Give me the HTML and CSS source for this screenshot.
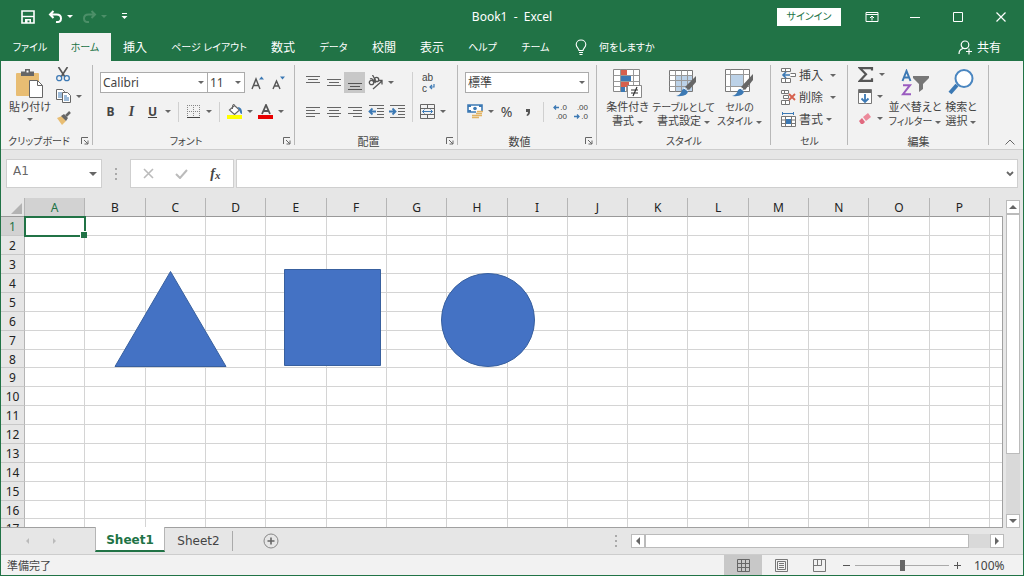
FILE: index.html
```html
<!DOCTYPE html>
<html lang="ja">
<head>
<meta charset="utf-8">
<title>Book1 - Excel</title>
<link rel="stylesheet" href="styles.css">
</head>
<body>
<div class="app">
  <header class="titlebar">
    <div class="quick">
      <button class="q-save" aria-label="上書き保存"><svg width="14" height="14" viewBox="0 0 14 14"><path d="M1 1h12v12H1z" fill="none" stroke="#fff" stroke-width="1.6"/><path d="M1 6.5h12" stroke="#fff" stroke-width="1.4"/><path d="M4 9h6v4H8.500v-2.500H6.500V13H4z" fill="#fff"/></svg></button>
      <button class="q-undo" aria-label="元に戻す"><svg width="15" height="13" viewBox="0 0 15 13"><path d="M5.500 1L2 4.500l3.500 3.500M2 4.500h6.500q4.500 0 4.500 4t-5 3.500" fill="none" stroke="#fff" stroke-width="2"/></svg></button>
      <i class="caret light"></i>
      <button class="q-redo" aria-label="やり直し"><svg width="15" height="13" viewBox="0 0 15 13"><path d="M9.500 1L13 4.500 9.500 8M13 4.500H6.500Q2 4.500 2 8.500T7 12" fill="none" stroke="#4c8f68" stroke-width="2"/></svg></button>
      <i class="caret dim"></i>
      <button class="q-more" aria-label="カスタマイズ"><svg width="7" height="7" viewBox="0 0 7 7"><path d="M1 .5h5" stroke="#fff"/><path d="M.5 3h6l-3 3z" fill="#fff"/></svg></button>
    </div>
    <h1>Book1&nbsp; -&nbsp; Excel</h1>
    <div class="window-tools">
      <button class="signin">サインイン</button>
      <button class="win" aria-label="リボンの表示オプション"><svg width="14" height="12" viewBox="0 0 14 12"><path d="M1 1.500h12v9H1zM1 3.500h12M7 9.500v-4M5 7l2-2 2 2" fill="none" stroke="#fff"/></svg></button>
      <button class="win" aria-label="最小化"><svg width="10" height="10" viewBox="0 0 10 10"><path d="M0 5.500h10" stroke="#fff"/></svg></button>
      <button class="win" aria-label="最大化"><svg width="10" height="10" viewBox="0 0 10 10"><path d="M.5.5h9v9h-9z" fill="none" stroke="#fff"/></svg></button>
      <button class="win" aria-label="閉じる"><svg width="10" height="10" viewBox="0 0 10 10"><path d="M.5.5l9 9m0-9l-9 9" stroke="#fff" stroke-width="1.200"/></svg></button>
    </div>
  </header>

  <nav class="tabs">
    <button class="t-file kana">ファイル</button>
    <button class="t-home kana active">ホーム</button>
    <button class="t-two">挿入</button>
    <button class="t-page kana">ページ レイアウト</button>
    <button class="t-two">数式</button>
    <button class="t-kana kana">データ</button>
    <button class="t-two">校閲</button>
    <button class="t-two">表示</button>
    <button class="t-kana kana">ヘルプ</button>
    <button class="t-kana kana">チーム</button>
    <button class="tell"><svg width="12" height="16" viewBox="0 0 12 16"><path d="M4 11.500c0-2-2.800-3-2.800-6a4.800 4.500 0 0 1 9.600 0c0 3-2.800 4-2.800 6zM4 13.500h4M4.500 15.500h3" fill="none" stroke="#fff" stroke-width="1.100"/></svg><span>何をしますか</span></button>
    <button class="share"><svg width="15" height="15" viewBox="0 0 15 15"><circle cx="7" cy="4.800" r="3.800" fill="none" stroke="#fff" stroke-width="1.200"/><path d="M1 14c0-3 2-5 4-5.500M11 8.500v6M8 11.500h6" fill="none" stroke="#fff" stroke-width="1.200"/></svg><span>共有</span></button>
  </nav>

  <section class="ribbon">
    <div class="group g-clip">
      <div class="body">
        <button class="big paste"><svg width="28" height="29" viewBox="0 0 28 29"><rect x="0" y="4" width="23" height="23" rx="1" fill="#e8bd73"/><path d="M5 2.500h4V0h5v2.500h4V7H5z" fill="#666"/><path d="M10.500 1.500h2v2h-2z" fill="#fff"/><path d="M13.500 11.500h8l5 5v12h-13z" fill="#fff" stroke="#666"/><path d="M21.500 11.500v5h5" fill="none" stroke="#666"/></svg><span>貼り付け</span><i class="caret"></i></button>
        <div class="stack">
          <button aria-label="切り取り"><svg width="14" height="15" viewBox="0 0 14 15"><path d="M2.500 0l6.500 10M11.500 0L5 10" stroke="#555" stroke-width="1.600"/><circle cx="3.200" cy="11.200" r="2.500" fill="none" stroke="#3c79b4" stroke-width="1.300"/><circle cx="10.800" cy="11.200" r="2.500" fill="none" stroke="#3c79b4" stroke-width="1.300"/></svg></button>
          <button aria-label="コピー"><svg width="15" height="14" viewBox="0 0 15 14"><path d="M.5.5h6l2 2v8h-8z" fill="#fff" stroke="#666"/><path d="M2 4h4M2 6h4M2 8h4" stroke="#3c79b4"/><path d="M6.500 3.500h5l3 3v7h-8z" fill="#fff" stroke="#666"/><path d="M8 7h3M8 9h5M8 11h5" stroke="#3c79b4"/></svg><i class="caret"></i></button>
          <button aria-label="書式のコピー"><svg width="15" height="14" viewBox="0 0 15 14"><path d="M1 7l5-2 4 5-4 4z" fill="#e8bd73"/><path d="M5 5l3-2 4 4-2 3z" fill="#666"/><path d="M10 5l4-4" stroke="#666" stroke-width="2.500"/></svg></button>
        </div>
      </div>
      <footer><span class="kana">クリップボード</span><button class="launch" aria-label="クリップボードの設定"><svg width="8" height="8" viewBox="0 0 8 8"><path d="M.5 7V.5H7M3 3l4 4M7 3.500V7H3.500" fill="none" stroke="#666"/></svg></button></footer>
    </div>

    <div class="group g-font">
      <div class="body rows">
        <div class="row">
          <span class="pick f-name"><select aria-label="フォント"><option>Calibri</option></select></span>
          <span class="pick f-size"><select aria-label="フォント サイズ"><option>11</option></select></span>
          <button class="i21 grow-a" aria-label="拡大"><svg width="13" height="14" viewBox="0 0 13 14"><path d="M1 13L5 3l4 10M2.500 9.500h5" fill="none" stroke="#555" stroke-width="1.400"/><path d="M8 3.500l2.500-3 2.500 3z" fill="#3c79b4"/></svg></button>
          <button class="i21" aria-label="縮小"><svg width="13" height="14" viewBox="0 0 13 14"><path d="M1 13l3.500-8L8 13M2.500 10h4" fill="none" stroke="#555" stroke-width="1.400"/><path d="M8 .5h5l-2.500 3z" fill="#3c79b4"/></svg></button>
        </div>
        <div class="row">
          <button class="i21 bold">B</button>
          <button class="i21 ital">I</button>
          <button class="i21 under">U</button>
          <i class="caret c10"></i><i class="rule"></i>
          <button class="i21" aria-label="罫線"><svg width="13" height="13" viewBox="0 0 13 13"><path d="M.5 0v12M6.500 0v12M12.500 0v12M0 .5h13M0 6.500h13" stroke="#888" stroke-dasharray="1 1"/><path d="M0 12.500h13" stroke="#444"/></svg></button>
          <i class="caret c10"></i><i class="rule"></i>
          <button class="i21" aria-label="塗りつぶし"><svg width="16" height="15" viewBox="0 0 16 15"><path d="M2.500 6l5-4.500 5 4.500-5 4.500z" fill="#fff" stroke="#666" stroke-width="1.200"/><path d="M5.500 5V2q0-2 2-1.500" fill="none" stroke="#666"/><path d="M10.500 3q5 0 4.500 7-2 0-2.500-4z" fill="#3c79b4"/><path d="M0 11h15v4H0z" fill="#ff0"/></svg></button>
          <i class="caret c10"></i>
          <button class="i21" aria-label="フォントの色"><svg width="16" height="15" viewBox="0 0 16 15"><path d="M4 10L8 1l4 9M5.500 7h5" fill="none" stroke="#555" stroke-width="1.800"/><path d="M0 11h15v4H0z" fill="#e80000"/></svg></button>
          <i class="caret c10"></i>
        </div>
      </div>
      <footer><span class="kana">フォント</span><button class="launch" aria-label="フォントの設定"><svg width="8" height="8" viewBox="0 0 8 8"><path d="M.5 7V.5H7M3 3l4 4M7 3.500V7H3.500" fill="none" stroke="#666"/></svg></button></footer>
    </div>

    <div class="group g-align">
      <div class="body">
        <div class="rows">
          <div class="row">
            <button class="i21" aria-label="上揃え"><svg width="14" height="14" viewBox="0 0 14 14"><path d="M0 .5h14M2 3.500h10M0 6.500h14" stroke="#666"/></svg></button>
            <button class="i21" aria-label="上下中央揃え"><svg width="14" height="14" viewBox="0 0 14 14"><path d="M0 3.500h14M2 6.500h10M0 9.500h14" stroke="#666"/></svg></button>
            <button class="i21 pressed" aria-label="下揃え"><svg width="14" height="14" viewBox="0 0 14 14"><path d="M0 7.500h14M2 10.500h10M0 13.500h14" stroke="#555"/></svg></button>
            <button class="i21" aria-label="方向"><svg width="16" height="15" viewBox="0 0 16 15"><g fill="none" stroke="#555" stroke-width="1.300"><circle cx="3.500" cy="7.500" r="2.200"/><path d="M2 4q2-1 3 1l2.500 3"/><circle cx="8.500" cy="4.500" r="2.200"/><path d="M4.500 0l3.500 6M5 14l9-8M10.500 5.500H14v4"/></g></svg></button>
            <i class="caret c10"></i>
          </div>
          <div class="row">
            <button class="i21" aria-label="左揃え"><svg width="14" height="12" viewBox="0 0 14 12"><path d="M0 1.500h14M0 4.500h9M0 7.500h14M0 10.500h9" stroke="#666"/></svg></button>
            <button class="i21" aria-label="中央揃え"><svg width="14" height="12" viewBox="0 0 14 12"><path d="M0 1.500h14M2 4.500h10M0 7.500h14M2 10.500h10" stroke="#666"/></svg></button>
            <button class="i21" aria-label="右揃え"><svg width="14" height="12" viewBox="0 0 14 12"><path d="M0 1.500h14M5 4.500h9M0 7.500h14M5 10.500h9" stroke="#666"/></svg></button>
            <button class="i21" aria-label="インデント解除"><svg width="16" height="13" viewBox="0 0 16 13"><path d="M1 .5h15M9 3.500h7M9 6.500h7M9 9.500h7M1 12.500h15" stroke="#666"/><path d="M8 6.500H2M4.500 3.500l-3 3 3 3" fill="none" stroke="#3c79b4" stroke-width="1.800"/></svg></button>
            <button class="i21" aria-label="インデント"><svg width="16" height="13" viewBox="0 0 16 13"><path d="M1 .5h15M9 3.500h7M9 6.500h7M9 9.500h7M1 12.500h15" stroke="#666"/><path d="M0 6.500h6M3.500 3.500l3 3-3 3" fill="none" stroke="#3c79b4" stroke-width="1.800"/></svg></button>
          </div>
        </div>
        <i class="rule tall"></i>
        <div class="rows">
          <div class="row"><button class="i21 wrap" aria-label="折り返し"><span>ab<br>c</span><svg width="6" height="6" viewBox="0 0 6 6"><path d="M5 0v3H1M3 1L1 3l2 2" fill="none" stroke="#3c79b4" stroke-width="1.200"/></svg></button></div>
          <div class="row"><button class="i21" aria-label="セルを結合"><svg width="15" height="15" viewBox="0 0 15 15"><path d="M.5.5h14v14H.5zM.5 4.500h14M.5 10.500h14M7.500.5v4M7.500 10.500v4" fill="none" stroke="#666"/><path d="M2.500 7.500h10M4.500 5.500l-2 2 2 2M10.500 5.500l2 2-2 2" fill="none" stroke="#3c79b4"/></svg></button><i class="caret c10"></i></div>
        </div>
      </div>
      <footer><span>配置</span><button class="launch" aria-label="配置の設定"><svg width="8" height="8" viewBox="0 0 8 8"><path d="M.5 7V.5H7M3 3l4 4M7 3.500V7H3.500" fill="none" stroke="#666"/></svg></button></footer>
    </div>

    <div class="group g-num">
      <div class="body rows">
        <div class="row"><span class="pick f-num"><select aria-label="表示形式"><option>標準</option></select></span></div>
        <div class="row">
          <button class="i21" aria-label="通貨"><svg width="17" height="15" viewBox="0 0 17 15"><path d="M1 1h14v7H1z" fill="#fff" stroke="#3c79b4" stroke-width="1.600"/><path d="M1 1h3v2H1zM12 1h3v2h-3zM1 6h3v2H1z" fill="#3c79b4"/><circle cx="8" cy="4.500" r="1.800" fill="#3c79b4"/><path d="M9 7h7v6H9z" fill="#f2f2f2"/><path d="M10 7.500h6M9 9.500h6M5 11.500h6M10 11.500h5M5 13.500h7" stroke="#e2b363" stroke-width="1.500"/></svg></button>
          <i class="caret c10"></i>
          <button class="i21 pct">%</button>
          <button class="i21" aria-label="桁区切り"><svg width="6" height="8" viewBox="0 0 6 8"><path d="M1 1h4v3q0 3-3 4l-.5-1Q3 6 3 4H1z" fill="#555"/></svg></button>
          <i class="rule"></i>
          <button class="i21 deci" aria-label="小数点以下を増やす"><span class="arrowed"><svg width="6" height="5" viewBox="0 0 6 5"><path d="M6 2.500H1M3 .5l-2 2 2 2" fill="none" stroke="#3c79b4" stroke-width="1.300"/></svg>.0</span><span>.00</span></button>
          <button class="i21 deci" aria-label="小数点以下を減らす"><span>.00</span><span class="arrowed"><svg width="6" height="5" viewBox="0 0 6 5"><path d="M0 2.500h5M3 .5l2 2-2 2" fill="none" stroke="#3c79b4" stroke-width="1.300"/></svg>.0</span></button>
        </div>
      </div>
      <footer><span>数値</span><button class="launch" aria-label="数値の設定"><svg width="8" height="8" viewBox="0 0 8 8"><path d="M.5 7V.5H7M3 3l4 4M7 3.500V7H3.500" fill="none" stroke="#666"/></svg></button></footer>
    </div>

    <div class="group g-style">
      <div class="body">
        <button class="big"><svg width="29" height="29" viewBox="0 0 29 29"><path d="M.5.500h26v22H.5z" fill="#fff" stroke="#888"/><path d="M.5 6.500h26M.5 12.500h26M.5 17.500h26M7.500.500v22M13.500.500v22M20.500.500v22" stroke="#999"/><path d="M8 1h6v5H8zM8 13h8v5H8z" fill="#d6604d"/><path d="M8 7h10v5H8zM8 18h4v5H8z" fill="#3c79b4"/><path d="M14.500 16.500h14v12h-14z" fill="#fff" stroke="#888"/><path d="M18 21h7M18 24h7M24 18l-4 9" stroke="#333" stroke-width="1.200"/></svg><span>条件付き<br>書式<i class="caret"></i></span></button>
        <button class="big tbl"><svg width="29" height="29" viewBox="0 0 29 29"><path d="M.5 1.500h23v21H.5z" fill="#fff" stroke="#777"/><path d="M7 7h16v15H7z" fill="#bcd2e8"/><path d="M.5 6.500h23M.5 11.500h23M.5 17.500h23M6.500 1.500v21M12.500 1.500v21M18.500 1.500v21" stroke="#999"/><path d="M27 7v6l-7 8-4-3z" fill="#666"/><path d="M7 27q5-1 6-6 4-3 6 1 0 6-12 5z" fill="#3c79b4"/><path d="M15 19l4 3" stroke="#fff"/></svg><span><span class="kana">テーブルとして</span><br>書式設定<i class="caret"></i></span></button>
        <button class="big"><svg width="29" height="29" viewBox="0 0 29 29"><path d="M.5.500h24v22H.5z" fill="#fff" stroke="#777"/><path d="M.5 5.500h24M.5 17.500h24M5.500.500v22M18.500.500v22" stroke="#999"/><path d="M6 6h12v11H6z" fill="#bcd2e8"/><path d="M28 5v6l-8 10-4-3z" fill="#666"/><path d="M7 27q5-1 6-6 4-3 6 1 0 6-12 5z" fill="#3c79b4"/><path d="M15 19l4 3" stroke="#fff"/></svg><span><span class="kana">セルの<br>スタイル</span><i class="caret"></i></span></button>
      </div>
      <footer><span class="kana">スタイル</span></footer>
    </div>

    <div class="group g-cell">
      <div class="body stack">
        <button><svg width="15" height="15" viewBox="0 0 15 15"><path d="M.5.500h9v3h-9zM4.500.500v3M.5 10.500h9v4h-9zM4.500 10.500v4M9.500 5.500h5v3h-5" fill="#fff" stroke="#777"/><path d="M9 7H2M5 4L2 7l3 3" fill="none" stroke="#3c79b4" stroke-width="1.600"/></svg><span>挿入</span><i class="caret far"></i></button>
        <button><svg width="15" height="15" viewBox="0 0 15 15"><path d="M.5.500h7v3h-7zM3.500.500v3M.5 10.500h8v4h-8zM4.500 10.500v4M2.500 5.500h5v3h-5z" fill="#fff" stroke="#777"/><path d="M8 4l6 6M14 4l-6 6" stroke="#d6604d" stroke-width="1.800"/></svg><span>削除</span><i class="caret far"></i></button>
        <button><svg width="15" height="15" viewBox="0 0 15 15"><path d="M.5 4.500h14v10H.5zM.5 8h14M.5 11.500h14M4.500 4.500v10M10.500 4.500v10" fill="#fff" stroke="#777"/><path d="M5 7h5v5H5z" fill="#3c79b4"/><path d="M1 1.500h12M1.500 0v3M12.500 0v3" stroke="#3c79b4"/></svg><span>書式</span><i class="caret near"></i></button>
      </div>
      <footer><span class="kana">セル</span></footer>
    </div>

    <div class="group g-edit">
      <div class="body">
        <div class="stack">
          <button aria-label="合計"><svg width="16" height="15" viewBox="0 0 16 15"><path d="M14 3.500V1.200H2l6 6.100-6 6.500h12v-2.500" fill="none" stroke="#555" stroke-width="2.200"/></svg><i class="caret"></i></button>
          <button aria-label="フィル"><svg width="14" height="15" viewBox="0 0 14 15"><path d="M.5.500h13v14H.5z" fill="#fff" stroke="#777"/><path d="M1 1h12v3H1z" fill="#666"/><path d="M7 5v8M3.500 9.500L7 13l3.500-3.500" fill="none" stroke="#3c79b4" stroke-width="1.800"/></svg><i class="caret"></i></button>
          <button aria-label="クリア"><svg width="14" height="13" viewBox="0 0 14 13"><path d="M5 5l5-4 3 4-5 4z" fill="#ec8a9b"/><path d="M4 6l3 4-2 2H3L1 9z" fill="#e0697f"/></svg><i class="caret"></i></button>
        </div>
        <button class="big sort"><svg width="29" height="29" viewBox="0 0 29 29"><path d="M1.500 12L5.500 2l4 10M3 8.500h5" fill="none" stroke="#3c79b4" stroke-width="2"/><path d="M2 16.200h7l-7 9h8" fill="none" stroke="#9a5cc0" stroke-width="2"/><path d="M12 7h16v2l-6 6v5l-4 3v-8l-6-6z" fill="#777"/></svg><span>並べ替えと<br><span class="kana">フィルター</span><i class="caret"></i></span></button>
        <button class="big find"><svg width="27" height="29" viewBox="0 0 27 29"><path d="M9 16l-7 8" stroke="#3c79b4" stroke-width="4"/><circle cx="16" cy="9.500" r="8.500" fill="#fff" stroke="#4a86c0" stroke-width="2"/></svg><span>検索と<br>選択<i class="caret"></i></span></button>
      </div>
      <footer><span>編集</span></footer>
    </div>
    <button class="collapse" aria-label="リボンを折りたたむ"><svg width="10" height="6" viewBox="0 0 10 6"><path d="M.5 5.500L5 1l4.500 4.500" fill="none" stroke="#666"/></svg></button>
  </section>

  <section class="formula">
    <span class="namebox"><input aria-label="名前ボックス" value="A1"></span>
    <i class="dots"></i>
    <div class="fx-tools">
      <button aria-label="キャンセル"><svg width="11" height="11" viewBox="0 0 11 11"><path d="M1 1l9 9M10 1l-9 9" stroke="#bbb" stroke-width="1.600"/></svg></button>
      <button aria-label="入力"><svg width="13" height="10" viewBox="0 0 13 10"><path d="M1 5l4 4 7-8" fill="none" stroke="#bbb" stroke-width="2"/></svg></button>
      <button class="fx">f<small>x</small></button>
    </div>
    <div class="fx-field"><input aria-label="数式バー"><svg width="8" height="6" viewBox="0 0 8 6"><path d="M1 1l3 3 3-3" fill="none" stroke="#666" stroke-width="1.800"/></svg></div>
  </section>

  <main class="work">
    <div class="sheet">
      <table>
        <colgroup><col class="c-head"><col span="16"><col class="c-tail"></colgroup>
        <thead><tr><th class="all"><svg width="11" height="11" viewBox="0 0 11 11"><path d="M11 0v11H0z" fill="#b3b3b3"/></svg></th><th class="on">A</th><th>B</th><th>C</th><th>D</th><th>E</th><th>F</th><th>G</th><th>H</th><th>I</th><th>J</th><th>K</th><th>L</th><th>M</th><th>N</th><th>O</th><th>P</th><th></th></tr></thead>
        <tbody id="rows"></tbody>
      </table>
      <svg class="shapes" width="424" height="100" viewBox="0 0 424 100"><g fill="#4472c4" stroke="#38609f"><path d="M56.500 2.500L1 97.500h111z"/><path d="M170.500.500h96v96h-96z"/><circle cx="374" cy="51" r="46.500"/></g></svg>
    </div>
    <div class="vscroll">
      <button aria-label="上へ"><i class="tri up"></i></button><div class="vtrack"><div class="vthumb"></div></div><button aria-label="下へ"><i class="tri down"></i></button>
    </div>
  </main>

  <div class="bottom">
    <div class="nav-arrows"><i class="tri left pale"></i><i class="tri right pale"></i></div>
    <button class="tab-on">Sheet1</button>
    <button class="tab-off">Sheet2</button>
    <button class="add" aria-label="新しいシート"><svg width="16" height="16" viewBox="0 0 16 16"><circle cx="8" cy="8" r="7" fill="none" stroke="#888"/><path d="M8 4.500v7M4.500 8h7" stroke="#666" stroke-width="1.600"/></svg></button>
    <i class="dots"></i>
    <div class="hscroll"><button aria-label="左へ"><i class="tri left"></i></button><div class="htrack"><div class="hthumb"></div></div><button aria-label="右へ"><i class="tri right"></i></button></div>
  </div>

  <footer class="status">
    <span class="ready">準備完了</span>
    <button class="view current" aria-label="標準"><svg width="13" height="13" viewBox="0 0 13 13"><path d="M.5.500h12v12H.5zM.5 4.500h12M.5 8.500h12M4.500.500v12M8.500.500v12" fill="none" stroke="#666"/></svg></button>
    <button class="view" aria-label="ページ レイアウト"><svg width="13" height="13" viewBox="0 0 13 13"><path d="M.5.500h12v12H.5zM2.500 2.500h8v8h-8zM4 4.500h5M4 6.500h5M4 8.500h5" fill="none" stroke="#777"/></svg></button>
    <button class="view" aria-label="改ページ プレビュー"><svg width="13" height="13" viewBox="0 0 13 13"><path d="M.5.500h12v12H.5zM4.500.500v6M8.500.500v6M.5 6.500h8" fill="none" stroke="#777"/></svg></button>
    <button class="step" aria-label="縮小"><svg width="9" height="9" viewBox="0 0 9 9"><path d="M1 4.500h7" stroke="#555"/></svg></button>
    <input class="zoom" type="range" min="0" max="100" value="50" aria-label="ズーム">
    <button class="step" aria-label="拡大"><svg width="9" height="9" viewBox="0 0 9 9"><path d="M1 4.500h7M4.500 1v7" stroke="#555"/></svg></button>
    <span class="percent">100%</span>
  </footer>
</div>
<script src="sheet.js"></script>
</body>
</html>
```
FILE: sheet.js
```js
const body = document.getElementById("rows");
for (let r = 1; r <= 17; r++) {
  const tr = body.insertRow();
  const th = document.createElement("th");
  th.textContent = r;
  if (r === 1) th.className = "on";
  tr.append(th);
  for (let c = 0; c < 17; c++) {
    const td = tr.insertCell();
    if (r === 1 && c === 0) td.className = "selected";
  }
}
```
FILE: styles.css
```css
* { box-sizing: border-box; }
body { margin: 0; font: 12px/15px "Noto Sans", "Noto Sans CJK JP", sans-serif; color: #444; font-feature-settings: "palt"; }
button, input, select { font: inherit; color: inherit; font-feature-settings: inherit; }
button { display: flex; align-items: center; justify-content: center; padding: 0; border: 0; background: none; white-space: nowrap; }
svg { display: block; flex: none; }
.app { display: flex; flex-direction: column; height: 100vh; border: 1px solid #217346; border-top: 0; background: #e6e6e6; overflow: hidden; }

.titlebar { display: grid; grid-template-columns: 1fr auto 1fr; align-items: center; height: 33px; flex: none; background: #217346; color: #fff; }
.titlebar h1 { margin: 0; font-size: 12px; font-weight: 400; }
.quick { display: flex; align-items: center; padding-left: 20px; }
.q-undo { margin: 0 4px 0 13px; }
.q-redo { margin: 0 4px 0 9px; }
.q-more { margin-left: 14px; }
.caret { display: block; flex: none; border: 3px solid transparent; border-top-color: #666; border-bottom: 0; }
.caret.light { border-top-color: #fff; }
.caret.dim { border-top-color: #4c8f68; }
.caret.c10 { margin: 0 2px; }
.window-tools { display: flex; justify-content: flex-end; align-items: center; padding-right: 1px; }
.signin { width: 64px; height: 18px; margin-right: 9px; background: #fff; color: #217346; font-size: 10px; }
.win { width: 43px; height: 30px; }

.tabs { display: flex; height: 28px; flex: none; background: #217346; color: #fff; }
.kana { font-size: 10px; }
.t-file { width: 58px; }
.t-home { width: 52px; }
.t-two { width: 48px; }
.t-page { width: 100px; }
.t-kana { width: 53px; }
.tabs .active { background: #f2f2f2; color: #217346; }
.tell { margin-left: 13px; gap: 12px; font-size: 10px; }
.share { margin-left: auto; margin-right: 22px; gap: 4px; }

.ribbon { display: flex; flex: none; height: 89px; background: #f2f2f2; border-bottom: 1px solid #cdcdcd; }
.group { display: flex; flex-direction: column; position: relative; flex: none; }
.group::after { content: ""; position: absolute; right: 0; top: 4px; bottom: 4px; width: 1px; background: #b8b8b8; }
.body { display: flex; flex: 1; padding-top: 8px; }
.group footer { display: flex; justify-content: center; align-items: center; height: 16px; position: relative; font-size: 11px; }
.launch { position: absolute; right: 4px; top: 4px; }
.g-clip { width: 92px; }
.g-font { width: 202px; }
.g-align { width: 163px; }
.g-num { width: 139px; }
.g-style { width: 174px; }
.g-cell { width: 77px; }
.g-edit { width: 141px; }
.g-clip footer, .g-font footer, .g-align footer, .g-num footer { padding-right: 16px; }
.big { flex-direction: column; justify-content: flex-start; line-height: 14px; font-size: 11px; }
.big > span { margin-top: 2px; }
.big .caret { display: inline-block; vertical-align: middle; margin-left: 3px; }
.paste { width: 40px; margin-left: 9px; }
.paste .caret { margin: 4px 0 0; }
.stack { display: flex; flex-direction: column; }
.stack button { height: 22px; justify-content: flex-start; gap: 5px; }
.g-clip .stack { margin: -6px 0 0 6px; }
.rows { display: flex; flex-direction: column; gap: 8px; }
.body.rows { padding-top: 11px; padding-left: 7px; }
.row { display: flex; align-items: center; height: 21px; }
.i21 { width: 21px; height: 21px; flex: none; }
.rule { width: 1px; height: 20px; background: #d0d0d0; margin: 0 4px 0 5px; flex: none; }
.rule.tall { height: 50px; }
.bold { font-weight: 700; }
.ital { font: italic 700 14px "Liberation Serif", serif; }
.under { text-decoration: underline; font-weight: 700; }
.pick { display: flex; position: relative; }
.pick select { width: 100%; height: 21px; appearance: none; background: #fff; border: 1px solid #ababab; border-radius: 0; padding: 0 2px; }
.pick::after, .namebox::after { content: ""; position: absolute; right: 4px; top: 9px; border: 3px solid transparent; border-top-color: #666; border-bottom: 0; pointer-events: none; }
.f-name { width: 108px; }
.f-size { width: 38px; margin-left: -1px; }
.grow-a { margin-left: 2px; }
.f-num { width: 124px; }
.g-align .body { padding: 11px 0 0 7px; }
.pressed { background: #c8c8c8; }
.wrap { position: relative; font: 10px/11px "Liberation Sans", sans-serif; text-align: left; justify-content: flex-start; padding-left: 5px; }
.wrap svg { position: absolute; left: 12px; top: 12px; }
.pct { font-size: 14px; }
.deci { flex-direction: column; align-items: flex-end; font: 8px/9px "Liberation Sans", sans-serif; padding-right: 2px; }
.arrowed { display: flex; align-items: center; gap: 1px; }
.g-style .body { padding-left: 8px; }
.g-style .big { width: 45px; }
.g-style .tbl { width: 67px; }
.g-cell .body { padding: 3px 0 0 10px; }
.g-cell .stack button { gap: 3px; }
.far { margin-left: 4px; }
.g-edit .body { padding-left: 10px; }
.g-edit .stack { margin-top: -6px; }
.g-edit .sort { width: 54px; margin-left: 3px; }
.g-edit .find { width: 38px; }
.collapse { align-self: flex-end; margin: 0 8px 4px auto; }

.formula { display: flex; flex: none; height: 48px; padding: 9px 5px 10px; }
.namebox, .fx-tools, .fx-field { display: flex; background: #fff; border: 1px solid #cfcfcf; position: relative; }
.namebox { width: 96px; }
.namebox::after { top: 12px; border-width: 4px 4px 0; }
.namebox input { width: 100%; border: 0; background: none; padding: 0 6px 4px; color: #666; font-family: "DejaVu Sans", sans-serif; }
.dots { width: 2px; height: 12px; align-self: center; background: repeating-linear-gradient(#aaa 0 2px, transparent 2px 5px); }
.formula .dots { margin: 0 13px; }
.fx-tools { width: 104px; padding: 0 1px; }
.fx-tools button { flex: 1; }
.fx { font: italic 700 14px "Liberation Serif", serif; }
.fx small { font-size: 11px; padding-top: 2px; }
.fx-field { flex: 1; margin-left: 2px; align-items: center; padding-right: 3px; }
.fx-field input { flex: 1; min-width: 0; border: 0; background: none; }

.work { display: flex; flex: 1; min-height: 0; }
.sheet { flex: 1; position: relative; overflow: hidden; border-bottom: 1px solid #a0a0a0; }
.sheet::after { content: ""; position: absolute; right: 0; top: 18px; bottom: 0; width: 1px; background: #a0a0a0; }
table { width: 100%; table-layout: fixed; border-collapse: separate; border-spacing: 0; }
.c-head { width: 24px; }
.c-tail { width: 13px; }
th, td { padding: 0; height: 19px; line-height: 16px; }
tbody tr:nth-child(8n) > * { height: 18px; line-height: 15px; }
th { padding-top: 2px; font-weight: 400; color: #222; border-right: 1px solid #b5b5b5; border-bottom: 1px solid #c8c8c8; }
thead th { border-bottom-color: #999; }
thead th:last-child { border-right: 0; }
th.on { background: #d2d2d2; color: #217346; }
.all svg { margin-left: 10px; }
td { background: #fff; border-right: 1px solid #d4d4d4; border-bottom: 1px solid #d4d4d4; }
.selected { position: relative; }
.selected::before { content: ""; position: absolute; inset: -1px -2px -2px -1px; border: 2px solid #217346; }
.selected::after { content: ""; position: absolute; right: -3px; bottom: -3px; width: 6px; height: 6px; background: #217346; border: 1px solid #fff; border-right: 0; border-bottom: 0; }
.shapes { position: absolute; left: 113px; top: 71px; }
.vscroll { display: flex; flex-direction: column; width: 14px; margin: 2px 3px 0; }
.vscroll button, .hscroll button { width: 14px; height: 14px; flex: none; background: #fff; border: 1px solid #bbb; }
.vtrack { flex: 1; background: #d9d9d9; }
.vthumb { height: 80%; background: #fff; border: 1px solid #bbb; }
.tri { display: block; border: 4px solid transparent; }
.up { border-bottom-color: #666; border-top: 0; }
.down { border-top-color: #666; border-bottom: 0; }
.left { border-right-color: #666; border-left: 0; }
.right { border-left-color: #666; border-right: 0; }
.tri.pale { border-width: 3px; }
.left.pale { border-right-color: #bbb; border-left: 0; }
.right.pale { border-left-color: #bbb; border-right: 0; }

.bottom { display: flex; flex: none; height: 26px; font-family: "DejaVu Sans", sans-serif; }
.nav-arrows { display: flex; align-items: center; gap: 24px; width: 94px; padding-left: 25px; }
.tab-on { width: 70px; height: 25px; margin-top: -1px; padding-top: 4px; background: #fff; border: 1px solid #b5b5b5; border-top: 0; border-bottom: 2px solid #217346; color: #217346; font-weight: 700; position: relative; }
.tab-off { width: 68px; height: 20px; margin-top: 3px; border-right: 1px solid #aaa; }
.add { margin-left: 30px; }
.bottom .dots { margin-left: auto; }
.hscroll { display: flex; align-items: center; width: 373px; margin: 0 19px 0 14px; }
.htrack { flex: 1; height: 14px; background: #d9d9d9; }
.hthumb { width: 94%; height: 14px; background: #fff; border: 1px solid #bbb; }

.status { display: flex; flex: none; align-items: center; height: 21px; background: #f2f2f2; border-top: 1px solid #cdcdcd; padding-right: 17px; }
.ready { margin: 0 auto 0 6px; font-size: 11px; }
.view { width: 38px; align-self: stretch; }
.current { background: #c8c8c8; }
.step { width: 17px; }
.zoom { appearance: none; width: 94px; height: 14px; margin: 0; background: linear-gradient(#aaa, #aaa) center / 100% 1px no-repeat; }
.zoom::-webkit-slider-thumb { appearance: none; width: 5px; height: 11px; background: #666; }
.percent { width: 32px; margin-left: 8px; }
```
